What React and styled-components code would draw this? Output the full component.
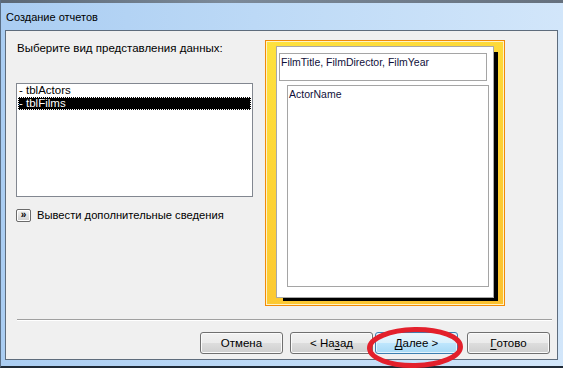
import React from 'react';
import styled, { createGlobalStyle } from 'styled-components';

const GlobalStyle = createGlobalStyle`
  html, body {
    margin: 0;
    padding: 0;
    background: #2e3640;
    overflow: hidden;
  }
`;

const Window = styled.div`
  position: relative;
  width: 563px;
  height: 368px;
  box-sizing: border-box;
  display: flex;
  flex-direction: column;
  background: linear-gradient(90deg, #aacdf2 0%, #bcd9f6 45%, #d2e6fa 100%);
  border-left: 1px solid #5b6f86;
  border-bottom: 2px solid #1f2a36;
  font-family: "Liberation Sans", Arial, sans-serif;
  font-size: 11.5px;
  color: #000;
`;

const GlassStrip = styled.div`
  height: 3px;
  background: linear-gradient(90deg, #5b6876, #7c8a99 40%, #66717e);
`;

const TitleBar = styled.div`
  height: 27px;
  display: flex;
  align-items: center;
  padding-left: 5px;
  font-size: 11px;
`;

const Client = styled.div`
  flex: 1;
  margin: 0 5px 6px 4px;
  background: #f0f0f0;
  border: 1px solid #5e6c7c;
  display: flex;
  flex-direction: column;
`;

const Body = styled.div`
  display: grid;
  grid-template-columns: 237px 240px;
  column-gap: 12px;
  padding: 9px 0 0 10px;
  height: 279px;
`;

const LeftColumn = styled.div`
  display: flex;
  flex-direction: column;
`;

const Label = styled.div`
  margin: 0 0 0 1px;
  line-height: 16px;
`;

const ListBox = styled.div`
  margin-top: 27px;
  height: 112px;
  background: #fff;
  border: 1px solid #828790;
  padding: 0 1px;
  display: flex;
  flex-direction: column;
`;

const ListItem = styled.div`
  height: 13px;
  line-height: 13px;
  overflow: hidden;
  padding-left: 1px;
  background: ${p => (p.$selected ? '#000' : 'transparent')};
  color: ${p => (p.$selected ? '#fff' : '#000')};
  outline: ${p => (p.$selected ? '1px dotted #fff' : 'none')};
  outline-offset: -1px;
`;

const MoreRow = styled.div`
  margin-top: 11px;
  display: flex;
  align-items: center;
  gap: 6px;
  line-height: 14px;
  font-size: 11.2px;
`;

const TinyButton = styled.div`
  width: 13px;
  height: 11px;
  border: 1px solid #6a6a6a;
  border-radius: 2px;
  background: linear-gradient(#f6f6f6, #e2e2e2 50%, #cfcfcf);
  box-shadow: inset 0 0 0 1px #fff;
  display: flex;
  align-items: center;
  justify-content: center;
  font-size: 10px;
  font-weight: bold;
  line-height: 1;
`;

const PreviewFrame = styled.div`
  width: 240px;
  height: 266px;
  box-sizing: border-box;
  border: 1px solid #f28a06;
  box-shadow: inset 0 0 0 1px #fff3c4;
  background: linear-gradient(160deg, #fee23e 0%, #fdd335 45%, #fbc12f 100%);
  padding: 5px 10px 0 10px;
`;

const PageStack = styled.div`
  position: relative;
  width: 218px;
  height: 252px;

  &::before {
    content: '';
    position: absolute;
    left: 7px;
    top: 6px;
    right: -4px;
    bottom: -3px;
    background: #000;
  }
`;

const Page = styled.div`
  position: relative;
  width: 218px;
  height: 252px;
  box-sizing: border-box;
  background: #fff;
  border: 1px solid #a8a8a8;
  padding: 6px 0 0 2px;
  display: flex;
  flex-direction: column;
`;

const FieldBox = styled.div`
  box-sizing: border-box;
  width: ${p => p.$width}px;
  height: ${p => p.$height}px;
  margin-left: ${p => p.$indent || 0}px;
  margin-top: ${p => p.$gap || 0}px;
  border: 1px solid #a5a5a5;
  padding: 1px 0 0 1px;
  color: #10103a;
  font-size: 10.5px;
  line-height: 14px;
`;

const Separator = styled.div`
  margin: 0 5px 0 11px;
  height: 1px;
  background: #a0a0a0;
  border-bottom: 1px solid #fff;
`;

const ButtonRow = styled.div`
  display: flex;
  padding: 11px 0 0 194px;
`;

const Button = styled.div`
  width: 83px;
  height: 22px;
  box-sizing: border-box;
  margin-left: ${p => p.$gap}px;
  border: 1px solid ${p => (p.$hot ? '#3c7fb1' : '#707070')};
  border-radius: 3px;
  background: ${p =>
    p.$hot
      ? 'linear-gradient(#eaf6fd 0%, #d9f0fc 50%, #bee6fd 51%, #a7d9f5 100%)'
      : 'linear-gradient(#f2f2f2 0%, #ebebeb 50%, #dddddd 51%, #cfcfcf 100%)'};
  box-shadow: inset 0 0 0 1px ${p => (p.$hot ? '#e4f4fd' : '#fbfbfb')};
  display: flex;
  align-items: center;
  justify-content: center;

  u {
    text-underline-offset: 2px;
  }
`;

const Annotation = styled.svg`
  position: absolute;
  left: 365px;
  top: 326px;
  pointer-events: none;
`;

export default function App() {
  return (
    <>
      <GlobalStyle />
      <Window>
        <GlassStrip />
        <TitleBar>Создание отчетов</TitleBar>
        <Client>
          <Body>
            <LeftColumn>
              <Label>Выберите вид представления данных:</Label>
              <ListBox>
                <ListItem>- tblActors</ListItem>
                <ListItem $selected>- tblFilms</ListItem>
              </ListBox>
              <MoreRow>
                <TinyButton>»</TinyButton>
                <span>Вывести дополнительные сведения</span>
              </MoreRow>
            </LeftColumn>
            <PreviewFrame>
              <PageStack>
                <Page>
                  <FieldBox $width={208} $height={28}>FilmTitle, FilmDirector, FilmYear</FieldBox>
                  <FieldBox $width={202} $height={202} $indent={8} $gap={4}>ActorName</FieldBox>
                </Page>
              </PageStack>
            </PreviewFrame>
          </Body>
          <Separator />
          <ButtonRow>
            <Button $gap={0}>Отмена</Button>
            <Button $gap={7}>&lt; На<u>з</u>ад</Button>
            <Button $gap={2} $hot><u>Д</u>алее &gt;</Button>
            <Button $gap={9}><u>Г</u>отово</Button>
          </ButtonRow>
        </Client>
        <Annotation width="100" height="43" viewBox="0 0 100 43">
          <ellipse cx="49" cy="21.5" rx="45.5" ry="18" fill="none" stroke="#e3202c" strokeWidth="5" transform="rotate(-1 49 21.5)" />
        </Annotation>
      </Window>
    </>
  );
}
